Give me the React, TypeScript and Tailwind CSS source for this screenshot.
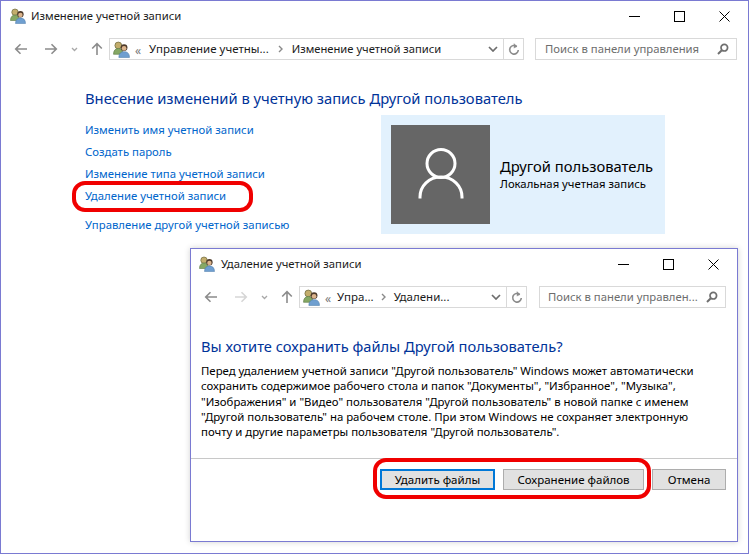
import React from "react";

const F = "font-['Noto_Sans','Open_Sans',sans-serif]";

function UsersIcon({ size = 16 }: { size?: number }) {
  return (
    <svg width={size} height={size} viewBox="0 0 16 16" className="shrink-0">
      <circle cx="5" cy="4.200" r="3.200" fill="#c3ad6c" stroke="#6f6a3f" strokeWidth="0.700" />
      <path d="M0.500 12.500c0-3.600 1.800-5.500 4.500-5.500s4.500 1.900 4.500 5.500z" fill="#86a864" stroke="#5d7a45" strokeWidth="0.600" />
      <circle cx="10.400" cy="6.200" r="3.200" fill="#4d3a2a" />
      <circle cx="10.400" cy="6.900" r="2.200" fill="#dcb48c" />
      <path d="M5.500 15.500c0-3.800 2-5.500 5-5.500s5 1.700 5 5.500z" fill="#6f9fd0" stroke="#4a78a8" strokeWidth="0.500" />
    </svg>
  );
}

function Nav({ disabledForward }: { disabledForward?: boolean }) {
  const c = disabledForward ? "#d6d6d6" : "#8c8c8c";
  return (
    <div className="flex items-center shrink-0">
      <svg width="14" height="12" viewBox="0 0 14 12" fill="none" stroke="#8c8c8c" strokeWidth="1.6">
        <path d="M13 6H2M6.500 1.200 1.700 6l4.800 4.800" />
      </svg>
      <svg width="14" height="12" viewBox="0 0 14 12" fill="none" stroke={c} strokeWidth="1.6" className="ml-[16px]">
        <path d="M1 6h11M7.500 1.200 12.300 6l-4.800 4.800" />
      </svg>
      <svg width="7" height="5" viewBox="0 0 7 5" fill="none" stroke="#a8a8a8" strokeWidth="1.300" className="ml-[13px]">
        <path d="M1 1l2.500 2.500L6 1" />
      </svg>
      <svg width="12" height="14" viewBox="0 0 12 14" fill="none" stroke="#8c8c8c" strokeWidth="1.6" className="ml-[13px]">
        <path d="M6 13V2M1.200 6.500 6 1.700l4.800 4.800" />
      </svg>
    </div>
  );
}

function Chevron() {
  return (
    <svg width="10" height="6" viewBox="0 0 10 6" fill="none" stroke="#6d6d6d" strokeWidth="1.700">
      <path d="M1 1l4 4 4-4" />
    </svg>
  );
}

function Refresh() {
  return (
    <svg width="12" height="13" viewBox="0 0 12 13" fill="none" stroke="#8a8a8a" strokeWidth="1.600">
      <path d="M8.800 3.500A4.300 4.300 0 1 0 10.300 7" />
      <path d="M5.800 0.500 9 3.500 5.800 5" fill="#8a8a8a" strokeWidth="0.600" />
    </svg>
  );
}

function SearchIcon() {
  return (
    <svg width="12" height="12" viewBox="0 0 12 12" fill="none" stroke="#6f6f6f" strokeWidth="1.700">
      <circle cx="7.300" cy="4.700" r="3.300" />
      <path d="M4.800 7.200 1 11" strokeWidth="2" />
    </svg>
  );
}

function WinButtons({ gap }: { gap: string }) {
  return (
    <div className={`flex items-center ${gap}`}>
      <div className="w-[11px] h-[1px] bg-black" />
      <div className="w-[11px] h-[11px] border border-black" />
      <svg width="11" height="11" viewBox="0 0 11 11" stroke="#000" strokeWidth="1">
        <path d="M0.500 0.500l10 10M10.500 0.500l-10 10" />
      </svg>
    </div>
  );
}

const Sep = () => (
  <svg width="6" height="8" viewBox="0 0 6 8" fill="none" stroke="#8a8a8a" strokeWidth="1.400" className="shrink-0">
    <path d="M1 1l3 3-3 3" />
  </svg>
);

const Quotes = () => <span className="text-[#777] text-[12px] leading-none shrink-0">«</span>;

const links: [string, string][] = [
  ["Изменить имя учетной записи", "mt-[12px]"],
  ["Создать пароль", "mt-[5px]"],
  ["Изменение типа учетной записи", "mt-[5px]"],
  ["Удаление учетной записи", "mt-[5px]"],
  ["Управление другой учетной записью", "mt-[12px]"],
];

const bodyLines = [
  "Перед удалением учетной записи \"Другой пользователь\" Windows может автоматически",
  "сохранить содержимое рабочего стола и папок \"Документы\", \"Избранное\", \"Музыка\",",
  "\"Изображения\" и \"Видео\" пользователя \"Другой пользователь\" в новой папке с именем",
  "\"Другой пользователь\" на рабочем столе. При этом Windows не сохраняет электронную",
  "почту и другие параметры пользователя \"Другой пользователь\".",
];

function Btn({ label, w, primary }: { label: string; w: string; primary?: boolean }) {
  return (
    <div
      className={`${w} h-[21px] flex items-center justify-center bg-[#e1e1e1] text-[11.5px] text-black whitespace-nowrap ${
        primary ? "border-2 border-[#0078d7]" : "border border-[#adadad]"
      }`}
    >
      {label}
    </div>
  );
}

export default function App() {
  return (
    <div className={`relative w-[750px] h-[554px] overflow-hidden bg-white ${F}`}>
      <div className="w-[749px] h-[554px] border border-[#7a7ad2] flex flex-col">
        <div className="h-[30px] flex items-center pl-[9px] pr-[18px] shrink-0">
          <UsersIcon />
          <span className="ml-[5px] text-[11.25px] text-[#1a1a1a] whitespace-nowrap">Изменение учетной записи</span>
          <div className="ml-auto">
            <WinButtons gap="gap-[34px]" />
          </div>
        </div>
        <div className="h-[22px] mt-[7px] flex items-center pl-[13px] pr-[11px] shrink-0">
          <Nav />
          <div className="ml-[6px] w-[415px] h-[22px] border border-[#d9d9d9] flex items-center pl-[3px] shrink-0">
            <UsersIcon size={17} />
            <span className="ml-[5px]"><Quotes /></span>
            <span className="ml-[8px] text-[11.5px] text-[#1a1a1a] whitespace-nowrap">Управление учетны...</span>
            <span className="ml-[9px]"><Sep /></span>
            <span className="ml-[8px] text-[11.2px] text-[#1a1a1a] whitespace-nowrap">Изменение учетной записи</span>
            <div className="ml-auto flex items-center h-full">
              <div className="pr-[5px]"><Chevron /></div>
              <div className="w-[20px] h-full border-l border-[#d9d9d9] flex items-center justify-center"><Refresh /></div>
            </div>
          </div>
          <div className="ml-[11px] w-[202px] h-[22px] border border-[#d9d9d9] flex items-center pl-[9px] pr-[7px] shrink-0">
            <span className="text-[11.3px] text-[#6d6d6d] whitespace-nowrap">Поиск в панели управления</span>
            <div className="ml-auto"><SearchIcon /></div>
          </div>
        </div>
        <div className="flex pl-[84px] pt-[27px]">
          <div className="w-[296px] shrink-0 flex flex-col">
            <div className="text-[14.75px] leading-[22px] text-[#003399] whitespace-nowrap h-[22px]">
              Внесение изменений в учетную запись Другой пользователь
            </div>
            {links.map(([t, m]) => (
              <div key={t} className={`${m} text-[11.35px] leading-[17px] text-[#0066cc] whitespace-nowrap`}>{t}</div>
            ))}
          </div>
        </div>
        <div className="ml-[380px] -mt-[118px] w-[284px] h-[119px] bg-[#e2f1fd] p-[10px] flex items-center shrink-0">
          <div className="w-[99px] h-[99px] bg-[#666666] flex items-center justify-center shrink-0">
            <svg width="46" height="52" viewBox="0 0 46 52" fill="none" stroke="#fff" strokeWidth="3" className="-mt-[2px]">
              <circle cx="23" cy="15.500" r="14" />
              <path d="M2 50.500v-1.500c0-11 9-20 21-20s21 9 21 20v1.500" />
            </svg>
          </div>
          <div className="ml-[10px] flex flex-col">
            <div className="text-[14.75px] leading-[19px] text-black whitespace-nowrap">Другой пользователь</div>
            <div className="text-[11.3px] leading-[16px] text-black whitespace-nowrap">Локальная учетная запись</div>
          </div>
        </div>
      </div>

      {/* red markers */}
      <div className="absolute left-[72px] top-[181px] w-[181px] h-[31px] border-4 border-[#f00000] rounded-[13px]" />

      {/* dialog window */}
      <div className="absolute left-[190px] top-[248px] w-[548px] h-[294px] bg-white border border-[#7a7ad2] flex flex-col shadow-[0_0_6px_rgba(0,0,0,0.18)]">
        <div className="h-[30px] flex items-center pl-[8px] pr-[18px] shrink-0">
          <UsersIcon />
          <span className="ml-[6px] text-[11.3px] text-[#1a1a1a] whitespace-nowrap">Удаление учетной записи</span>
          <div className="ml-auto">
            <WinButtons gap="gap-[34px]" />
          </div>
        </div>
        <div className="h-[22px] mt-[7px] flex items-center pl-[13px] shrink-0">
          <Nav disabledForward />
          <div className="ml-[6px] w-[228px] h-[22px] border border-[#d9d9d9] flex items-center pl-[3px] shrink-0">
            <UsersIcon size={17} />
            <span className="ml-[5px]"><Quotes /></span>
            <span className="ml-[6px] text-[11.5px] text-[#1a1a1a] whitespace-nowrap">Упра...</span>
            <span className="ml-[7px]"><Sep /></span>
            <span className="ml-[7px] text-[11.5px] text-[#1a1a1a] whitespace-nowrap">Удалени...</span>
            <div className="ml-auto flex items-center h-full">
              <div className="pr-[5px]"><Chevron /></div>
              <div className="w-[20px] h-full border-l border-[#d9d9d9] flex items-center justify-center"><Refresh /></div>
            </div>
          </div>
          <div className="ml-[12px] w-[187px] h-[22px] border border-[#d9d9d9] flex items-center pl-[8px] pr-[7px] shrink-0">
            <span className="text-[11.3px] text-[#6d6d6d] whitespace-nowrap">Поиск в панели управлен...</span>
            <div className="ml-auto"><SearchIcon /></div>
          </div>
        </div>
        <div className="pl-[10px] pt-[27px] flex-1">
          <div className="text-[14.66px] leading-[22px] text-[#003399] whitespace-nowrap">Вы хотите сохранить файлы Другой пользователь?</div>
          <div className="mt-[6px] text-[11.4px] leading-[15.25px] text-black">
            {bodyLines.map((l) => (
              <div key={l} className="whitespace-nowrap">{l}</div>
            ))}
          </div>
        </div>
        <div className="h-[83px] border-t border-[#c8c8c8] shrink-0 flex justify-end gap-[8px] pt-[10px] pr-[11px]">
          <Btn label="Удалить файлы" w="w-[115px]" primary />
          <Btn label="Сохранение файлов" w="w-[141px]" />
          <Btn label="Отмена" w="w-[74px]" />
        </div>
      </div>

      <div className="absolute left-[373px] top-[458px] w-[278px] h-[41px] border-4 border-[#f00000] rounded-[13px]" />
    </div>
  );
}
